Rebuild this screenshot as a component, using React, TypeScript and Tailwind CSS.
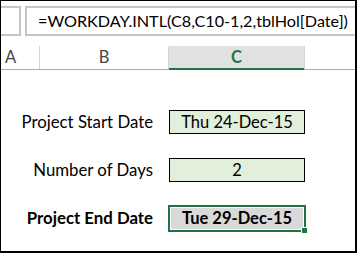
const FONT = "font-['Lato','Open_Sans',sans-serif]";

function Row({ label, value, bold }: { label: string; value: string; bold?: boolean }) {
  return (
    <div className="flex items-center h-[24px]">
      <div
        className={`w-[168px] shrink-0 text-right pr-[16px] text-[16.8px] leading-none text-black whitespace-nowrap ${bold ? 'font-bold' : ''}`}
      >
        {label}
      </div>
      {bold ? (
        <div className="relative w-[138px] -ml-px h-[27px] border-2 border-[#217346] p-px">
          <div className="h-full bg-[#d9d9d9] flex items-center justify-center text-[16.5px] font-bold text-black">
            {value}
          </div>
          <div className="absolute -right-[4px] -bottom-[4px] w-[5px] h-[5px] bg-[#217346] border border-white box-content" />
        </div>
      ) : (
        <div className="w-[136px] h-[24px] border border-black bg-[#e2efda] flex items-center justify-center text-[16.5px] text-black">
          {value}
        </div>
      )}
    </div>
  );
}

export default function App() {
  return (
    <div
      className={`w-[357px] h-[253px] bg-white border-l border-t border-r-2 border-b-2 border-black overflow-hidden ${FONT}`}
    >
      {/* formula bar */}
      <div className="flex mt-[5px] h-[30px] gap-[4px]">
        <div className="w-[22px] -ml-[2px] border-2 border-l-0 border-[#c6c6c6] shrink-0" />
        <div className="flex-1 border-2 border-r-0 border-[#c6c6c6] flex items-center pl-[11px] text-[16.2px] text-black whitespace-nowrap">
          =WORKDAY.INTL(C8,C10-1,2,tblHol[Date])
        </div>
      </div>

      {/* column headers */}
      <div className="flex mt-[10px] h-[24px] border-b border-[#ababab] text-[16.5px] text-[#444]">
        <div className="w-[39px] border-r border-[#d4d4d4] pl-[4px] flex items-center">A</div>
        <div className="w-[129px] border-r border-[#d4d4d4] flex items-center justify-center">B</div>
        <div className="w-[135px] bg-[#e1e1e1] border-b-2 border-[#217346] -mb-px flex items-center justify-center font-bold text-[#217346]">
          C
        </div>
        <div className="flex-1 border-l border-[#d4d4d4]" />
      </div>

      {/* body */}
      <div className="flex flex-col gap-[24px] mt-[40px]">
        <Row label="Project Start Date" value="Thu 24-Dec-15" />
        <Row label="Number of Days" value="2" />
        <Row label="Project End Date" value="Tue 29-Dec-15" bold />
      </div>
    </div>
  );
}
